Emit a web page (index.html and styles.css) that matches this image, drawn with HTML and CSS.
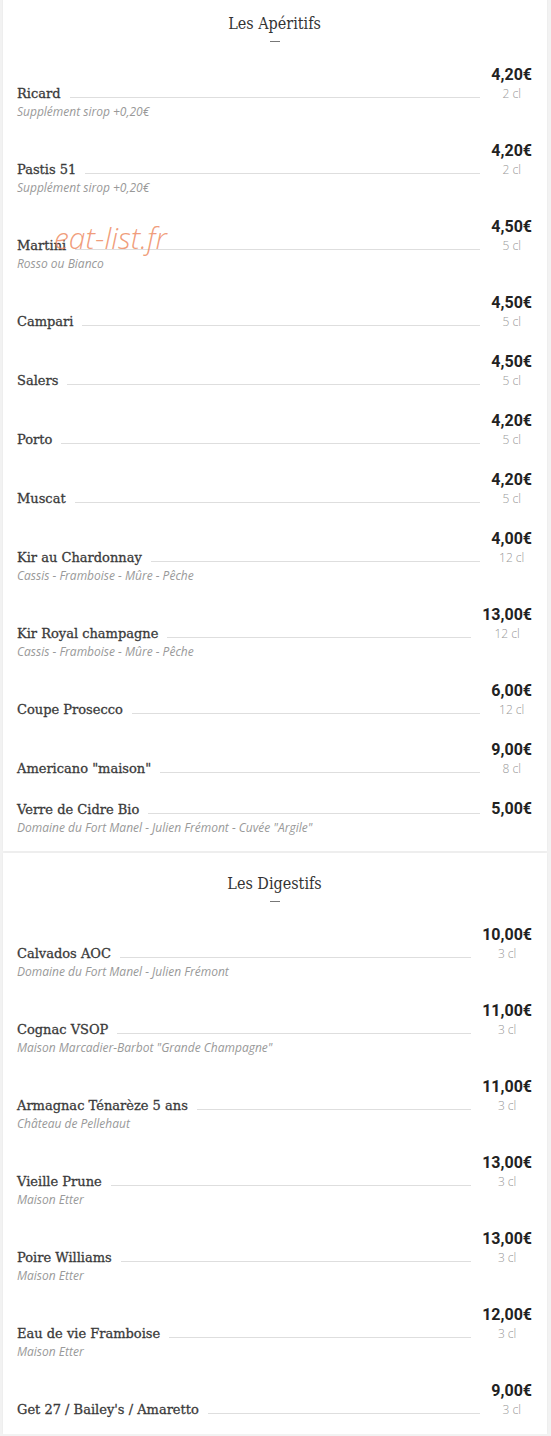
FILE: index.html
```html
<!DOCTYPE html>
<html lang="fr">
<head>
  <meta charset="UTF-8">
  <meta name="viewport" content="width=device-width, initial-scale=1.0">
  <title>Carte - Apéritifs et Digestifs</title>
  <link rel="stylesheet" href="styles.css">
</head>
<body>
  <div class="menu">
    <section class="card">
      <h2 class="card-title">Les Apéritifs</h2>
      <div class="title-dash"></div>

      <div class="item">
        <div class="row">
          <span class="name">Ricard</span>
          <span class="leader"></span>
          <div class="price-box"><div class="price">4,20€</div><div class="volume">2 cl</div></div>
        </div>
        <p class="desc">Supplément sirop +0,20€</p>
      </div>

      <div class="item">
        <div class="row">
          <span class="name">Pastis 51</span>
          <span class="leader"></span>
          <div class="price-box"><div class="price">4,20€</div><div class="volume">2 cl</div></div>
        </div>
        <p class="desc">Supplément sirop +0,20€</p>
      </div>

      <div class="item">
        <div class="row">
          <span class="name">Martini</span>
          <span class="leader"></span>
          <div class="price-box"><div class="price">4,50€</div><div class="volume">5 cl</div></div>
        </div>
        <p class="desc">Rosso ou Bianco</p>
      </div>

      <div class="item">
        <div class="row">
          <span class="name">Campari</span>
          <span class="leader"></span>
          <div class="price-box"><div class="price">4,50€</div><div class="volume">5 cl</div></div>
        </div>
      </div>

      <div class="item">
        <div class="row">
          <span class="name">Salers</span>
          <span class="leader"></span>
          <div class="price-box"><div class="price">4,50€</div><div class="volume">5 cl</div></div>
        </div>
      </div>

      <div class="item">
        <div class="row">
          <span class="name">Porto</span>
          <span class="leader"></span>
          <div class="price-box"><div class="price">4,20€</div><div class="volume">5 cl</div></div>
        </div>
      </div>

      <div class="item">
        <div class="row">
          <span class="name">Muscat</span>
          <span class="leader"></span>
          <div class="price-box"><div class="price">4,20€</div><div class="volume">5 cl</div></div>
        </div>
      </div>

      <div class="item">
        <div class="row">
          <span class="name">Kir au Chardonnay</span>
          <span class="leader"></span>
          <div class="price-box"><div class="price">4,00€</div><div class="volume">12 cl</div></div>
        </div>
        <p class="desc">Cassis - Framboise - Mûre - Pêche</p>
      </div>

      <div class="item">
        <div class="row">
          <span class="name">Kir Royal champagne</span>
          <span class="leader"></span>
          <div class="price-box"><div class="price">13,00€</div><div class="volume">12 cl</div></div>
        </div>
        <p class="desc">Cassis - Framboise - Mûre - Pêche</p>
      </div>

      <div class="item">
        <div class="row">
          <span class="name">Coupe Prosecco</span>
          <span class="leader"></span>
          <div class="price-box"><div class="price">6,00€</div><div class="volume">12 cl</div></div>
        </div>
      </div>

      <div class="item">
        <div class="row">
          <span class="name">Americano "maison"</span>
          <span class="leader"></span>
          <div class="price-box"><div class="price">9,00€</div><div class="volume">8 cl</div></div>
        </div>
      </div>

      <div class="item">
        <div class="row">
          <span class="name">Verre de Cidre Bio</span>
          <span class="leader"></span>
          <div class="price-box"><div class="price">5,00€</div></div>
        </div>
        <p class="desc">Domaine du Fort Manel - Julien Frémont - Cuvée "Argile"</p>
      </div>

      <span class="watermark">eat-list.fr</span>
    </section>

    <section class="card">
      <h2 class="card-title">Les Digestifs</h2>
      <div class="title-dash"></div>

      <div class="item">
        <div class="row">
          <span class="name">Calvados AOC</span>
          <span class="leader"></span>
          <div class="price-box"><div class="price">10,00€</div><div class="volume">3 cl</div></div>
        </div>
        <p class="desc">Domaine du Fort Manel - Julien Frémont</p>
      </div>

      <div class="item">
        <div class="row">
          <span class="name">Cognac VSOP</span>
          <span class="leader"></span>
          <div class="price-box"><div class="price">11,00€</div><div class="volume">3 cl</div></div>
        </div>
        <p class="desc">Maison Marcadier-Barbot "Grande Champagne"</p>
      </div>

      <div class="item">
        <div class="row">
          <span class="name">Armagnac Ténarèze 5 ans</span>
          <span class="leader"></span>
          <div class="price-box"><div class="price">11,00€</div><div class="volume">3 cl</div></div>
        </div>
        <p class="desc">Château de Pellehaut</p>
      </div>

      <div class="item">
        <div class="row">
          <span class="name">Vieille Prune</span>
          <span class="leader"></span>
          <div class="price-box"><div class="price">13,00€</div><div class="volume">3 cl</div></div>
        </div>
        <p class="desc">Maison Etter</p>
      </div>

      <div class="item">
        <div class="row">
          <span class="name">Poire Williams</span>
          <span class="leader"></span>
          <div class="price-box"><div class="price">13,00€</div><div class="volume">3 cl</div></div>
        </div>
        <p class="desc">Maison Etter</p>
      </div>

      <div class="item">
        <div class="row">
          <span class="name">Eau de vie Framboise</span>
          <span class="leader"></span>
          <div class="price-box"><div class="price">12,00€</div><div class="volume">3 cl</div></div>
        </div>
        <p class="desc">Maison Etter</p>
      </div>

      <div class="item">
        <div class="row">
          <span class="name">Get 27 / Bailey's / Amaretto</span>
          <span class="leader"></span>
          <div class="price-box"><div class="price">9,00€</div><div class="volume">3 cl</div></div>
        </div>
      </div>
    </section>
  </div>
</body>
</html>
```

FILE: styles.css
```css
body {
  margin: 0;
  background-color: #f2f2f2;
  font-family: "Open Sans", "Liberation Sans", sans-serif;
}
.menu {
  margin: -7px 4px 0 3px;
  display: flex;
  flex-direction: column;
  gap: 2px;
}
.card {
  position: relative;
  background: #fff;
  padding: 0 15px 4px 14px;
  box-shadow: 0 0 2px rgba(0,0,0,0.05);
}
.card-title {
  margin: 0;
  padding-top: 19px;
  text-align: center;
  font-family: "Roboto Slab", "DejaVu Serif Condensed", "DejaVu Serif", serif;
  font-stretch: condensed;
  font-weight: normal;
  font-size: 16px;
  line-height: 24px;
  color: #333;
}
.title-dash {
  width: 10px;
  height: 1px;
  margin: 5px auto 13px;
  background: #777;
}
.item {
  padding: 10px 0 11px;
}
.row {
  display: flex;
  align-items: flex-end;
}
.name {
  font-family: "Roboto Slab", "DejaVu Serif", serif;
  font-size: 13px;
  line-height: 18px;
  color: #3a3a3a;
  -webkit-text-stroke: 0.3px #3a3a3a;
  white-space: nowrap;
}
.leader {
  flex: 1;
  border-bottom: 1px solid #dedede;
  margin: 0 11px 5px 9px;
}
.price-box {
  text-align: center;
}
.price {
  font-family: Roboto, "Liberation Sans", sans-serif;
  font-weight: bold;
  font-size: 16px;
  line-height: 20px;
  color: #222;
}
.volume {
  font-size: 12px;
  font-weight: 300;
  line-height: 18px;
  color: #999;
}
.desc {
  margin: 0;
  font-size: 12px;
  font-style: italic;
  line-height: 17px;
  color: #999;
}
.watermark {
  position: absolute;
  left: 51px;
  top: 224px;
  font-size: 30px;
  font-style: italic;
  font-weight: 300;
  color: rgba(238, 140, 100, 0.85);
  pointer-events: none;
}
```
